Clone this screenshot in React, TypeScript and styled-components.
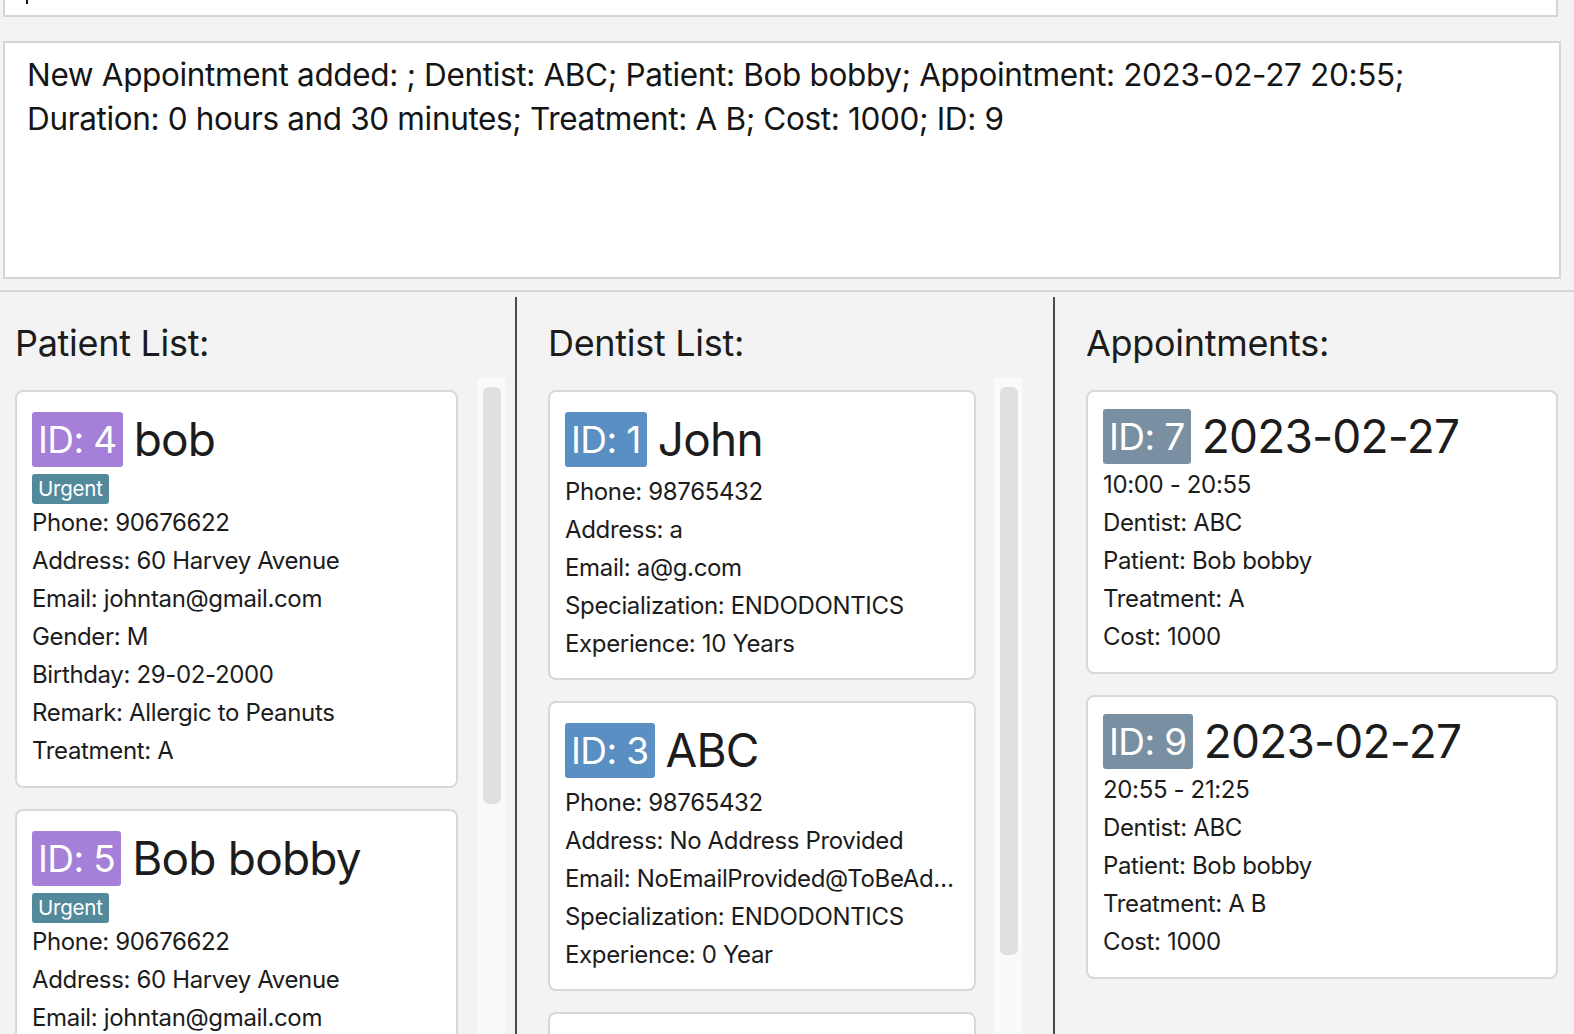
import React from "react";
import styled, { createGlobalStyle } from "styled-components";

const Global = createGlobalStyle`
  html, body {
    margin: 0;
    padding: 0;
    background: #f3f3f3;
    overflow: hidden;
  }
  body {
    font-family: Inter, "Noto Sans", "Liberation Sans", sans-serif;
    color: #1c1c1c;
  }
`;

type Tone = "patient" | "dentist" | "appt";
const BADGE: Record<Tone, string> = {
  patient: "#a57fd8",
  dentist: "#5a8fc3",
  appt: "#7990a3",
};

const patients = [
  {
    id: 4,
    name: "bob",
    fields: [
      "Phone: 90676622",
      "Address: 60 Harvey Avenue",
      "Email: johntan@gmail.com",
      "Gender: M",
      "Birthday: 29-02-2000",
      "Remark: Allergic to Peanuts",
      "Treatment: A",
    ],
  },
  {
    id: 5,
    name: "Bob bobby",
    fields: [
      "Phone: 90676622",
      "Address: 60 Harvey Avenue",
      "Email: johntan@gmail.com",
      "Gender: M",
      "Birthday: 29-02-2000",
      "Remark: Allergic to Peanuts",
      "Treatment: A",
    ],
  },
];

const dentists = [
  {
    id: 1,
    name: "John",
    fields: [
      "Phone: 98765432",
      "Address: a",
      "Email: a@g.com",
      "Specialization: ENDODONTICS",
      "Experience: 10 Years",
    ],
  },
  {
    id: 3,
    name: "ABC",
    fields: [
      "Phone: 98765432",
      "Address: No Address Provided",
      "Email: NoEmailProvided@ToBeAdded.com",
      "Specialization: ENDODONTICS",
      "Experience: 0 Year",
    ],
  },
  {
    id: 6,
    name: "Mary",
    fields: ["Phone: 98765432", "Address: a", "Email: a@g.com"],
  },
];

const appts = [
  {
    id: 7,
    date: "2023-02-27",
    fields: [
      "10:00 - 20:55",
      "Dentist: ABC",
      "Patient: Bob bobby",
      "Treatment: A",
      "Cost: 1000",
    ],
  },
  {
    id: 9,
    date: "2023-02-27",
    fields: [
      "20:55 - 21:25",
      "Dentist: ABC",
      "Patient: Bob bobby",
      "Treatment: A B",
      "Cost: 1000",
    ],
  },
];

export default function App() {
  return (
    <Page>
      <Global />
      <CommandBox>
        <Caret />
      </CommandBox>
      <ResultBox>
        New Appointment added: ; Dentist: ABC; Patient: Bob bobby; Appointment: 2023-02-27 20:55;
        <br />
        Duration: 0 hours and 30 minutes; Treatment: A B; Cost: 1000; ID: 9
      </ResultBox>
      <Panels>
        <Column $width={515} $padLeft={15}>
          <Heading>Patient List:</Heading>
          <ListRow>
            <List $width={443}>
              {patients.map((p) => (
                <Card key={p.id}>
                  <CardHead>
                    <Badge $tone="patient">ID: {p.id}</Badge>
                    <Title>{p.name}</Title>
                  </CardHead>
                  <Tag>Urgent</Tag>
                  {p.fields.map((f) => (
                    <Field key={f}>{f}</Field>
                  ))}
                </Card>
              ))}
            </List>
            <Track $gap={19}>
              <Thumb $height={417} />
            </Track>
          </ListRow>
        </Column>
        <Divider />
        <Column $width={536} $padLeft={31}>
          <Heading>Dentist List:</Heading>
          <ListRow>
            <List $width={428}>
              {dentists.map((d) => (
                <Card key={d.id} $padBottom={15}>
                  <CardHead $gapBelow={6}>
                    <Badge $tone="dentist">ID: {d.id}</Badge>
                    <Title>{d.name}</Title>
                  </CardHead>
                  {d.fields.map((f) => (
                    <Field key={f}>{f}</Field>
                  ))}
                </Card>
              ))}
            </List>
            <Track $gap={18}>
              <Thumb $height={568} />
            </Track>
          </ListRow>
        </Column>
        <Divider />
        <Column $padLeft={31}>
          <Heading>Appointments:</Heading>
          <ListRow>
            <List $width={472}>
              {appts.map((a) => (
                <Card key={a.id} $padTop={17}>
                  <CardHead $gapBelow={2}>
                    <Badge $tone="appt">ID: {a.id}</Badge>
                    <Title>{a.date}</Title>
                  </CardHead>
                  {a.fields.map((f) => (
                    <Field key={f}>{f}</Field>
                  ))}
                </Card>
              ))}
            </List>
          </ListRow>
        </Column>
      </Panels>
    </Page>
  );
}

const Page = styled.div`
  height: 100vh;
  display: flex;
  flex-direction: column;
  overflow: hidden;
`;

const CommandBox = styled.div`
  height: 15px;
  margin: 0 16px 0 3px;
  background: #fff;
  border: 2px solid #d5d5d5;
  border-top: none;
  position: relative;
`;

const Caret = styled.span`
  position: absolute;
  left: 21px;
  top: 0;
  width: 2px;
  height: 4px;
  background: #111;
`;

const ResultBox = styled.div`
  margin: 24px 13px 0 3px;
  height: 214px;
  background: #fff;
  border: 2px solid #d5d5d5;
  padding: 10px 22px;
  font-size: 31.5px;
  line-height: 44px;
  letter-spacing: -0.35px;
  color: #151515;
  white-space: nowrap;
  overflow: hidden;
`;

const Panels = styled.div`
  flex: 1;
  min-height: 0;
  margin-top: 11px;
  border-top: 2px solid #d5d5d5;
  display: flex;
  padding-top: 5px;
`;

const Column = styled.div<{ $width?: number; $padLeft: number }>`
  ${(p) => (p.$width ? `width: ${p.$width}px; flex: none;` : "flex: 1;")}
  min-width: 0;
  display: flex;
  flex-direction: column;
  padding: 23px 0 0 ${(p) => p.$padLeft}px;
  box-sizing: border-box;
`;

const Divider = styled.div`
  width: 2px;
  flex: none;
  background: #4a4a4a;
`;

const Heading = styled.h2`
  margin: 0;
  font-size: 36px;
  line-height: 46px;
  font-weight: 400;
  letter-spacing: -0.3px;
  color: #1c1c1c;
`;

const ListRow = styled.div`
  flex: 1;
  min-height: 0;
  margin-top: 12px;
  display: flex;
  overflow: hidden;
`;

const List = styled.div<{ $width: number }>`
  width: ${(p) => p.$width}px;
  flex: none;
  display: flex;
  flex-direction: column;
  gap: 21px;
  padding-top: 12px;
`;

const Track = styled.div<{ $gap: number }>`
  margin-left: ${(p) => p.$gap}px;
  width: 28px;
  flex: none;
  background: #fafafa;
  padding: 9px 4px 0 6px;
  box-sizing: border-box;
`;

const Thumb = styled.div<{ $height: number }>`
  height: ${(p) => p.$height}px;
  background: #e0e0e0;
  border-radius: 6px;
`;

const Card = styled.div<{ $padTop?: number; $padBottom?: number }>`
  background: #fff;
  border: 2px solid #d8d8d8;
  border-radius: 8px;
  padding: ${(p) => p.$padTop ?? 20}px 15px ${(p) => p.$padBottom ?? 16}px;
  display: flex;
  flex-direction: column;
  align-items: flex-start;
`;

const CardHead = styled.div<{ $gapBelow?: number }>`
  display: flex;
  align-items: center;
  gap: 11px;
  margin-bottom: ${(p) => p.$gapBelow ?? 0}px;
`;

const Badge = styled.span<{ $tone: Tone }>`
  display: inline-block;
  background: ${(p) => BADGE[p.$tone]};
  color: #fff;
  font-size: 37px;
  line-height: 55px;
  height: 55px;
  padding: 0 6px;
  border-radius: 3px;
  letter-spacing: -0.6px;
  white-space: nowrap;
`;

const Title = styled.span`
  font-size: 46px;
  line-height: 55px;
  letter-spacing: -0.8px;
  color: #1c1c1c;
  white-space: nowrap;
`;

const Tag = styled.span`
  margin-top: 7px;
  background: #528a9c;
  color: #fff;
  font-size: 20.5px;
  line-height: 30px;
  padding: 0 6px;
  border-radius: 3px;
  letter-spacing: -0.2px;
`;

const Field = styled.div`
  font-size: 24px;
  line-height: 38px;
  letter-spacing: -0.35px;
  color: #1c1c1c;
  white-space: nowrap;
  overflow: hidden;
  text-overflow: ellipsis;
  max-width: 100%;
`;
